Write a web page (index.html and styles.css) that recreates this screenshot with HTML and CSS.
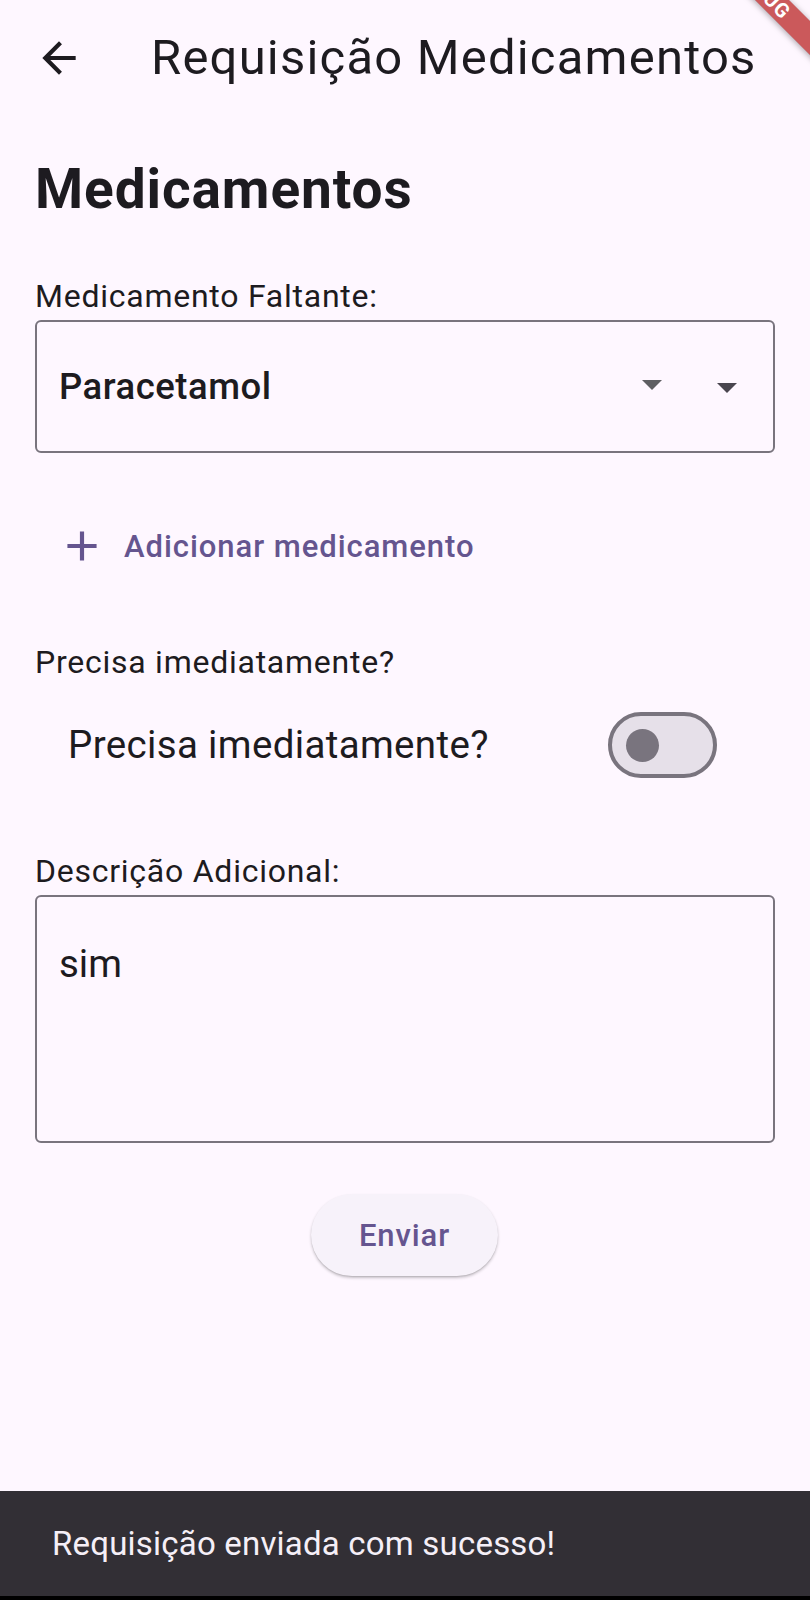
FILE: index.html
```html
<!DOCTYPE html>
<html lang="pt-BR">
<head>
<meta charset="utf-8">
<title>Requisição Medicamentos</title>
<link rel="stylesheet" href="styles.css">
</head>
<body>
<div class="screen">
  <header class="appbar">
    <button class="icon-btn back" aria-label="Voltar">
      <svg viewBox="0 0 24 24" width="50" height="50"><path d="M20 11H7.83l5.59-5.59L12 4l-8 8 8 8 1.41-1.41L7.83 13H20v-2z" fill="#1D1B20"/></svg>
    </button>
    <h1 class="title">Requisição Medicamentos</h1>
  </header>

  <main class="content">
    <h2 class="heading">Medicamentos</h2>

    <div class="field-label">Medicamento Faltante:</div>
    <div class="dropdown">
      <span class="dropdown-value">Paracetamol</span>
      <span class="dropdown-icons">
        <svg class="caret caret-light" viewBox="0 0 24 24" width="48" height="48"><path d="M7 10l5 5 5-5z"/></svg>
        <svg class="caret caret-dark" viewBox="0 0 24 24" width="48" height="48"><path d="M7 10l5 5 5-5z"/></svg>
      </span>
    </div>

    <button class="add-btn">
      <svg viewBox="0 0 24 24" width="50" height="50"><path d="M19 13h-6v6h-2v-6H5v-2h6V5h2v6h6v2z" fill="#65558F"/></svg>
      <span>Adicionar medicamento</span>
    </button>

    <div class="field-label label-urgent">Precisa imediatamente?</div>
    <div class="switch-row">
      <span class="switch-text">Precisa imediatamente?</span>
      <span class="switch"><span class="thumb"></span></span>
    </div>

    <div class="field-label label-desc">Descrição Adicional:</div>
    <div class="textarea">sim</div>

    <div class="actions">
      <button class="send-btn">Enviar</button>
    </div>
  </main>

  <div class="snackbar">Requisição enviada com sucesso!</div>
  <div class="navstrip"></div>

  <div class="debug-banner">DEBUG</div>
</div>
</body>
</html>
```

FILE: styles.css
```css
* { box-sizing: border-box; }

html, body {
  margin: 0;
  padding: 0;
  background: #FEF7FF;
}

body {
  font-family: Roboto, "Noto Sans", "Liberation Sans", sans-serif;
  color: #1D1B20;
}

.screen {
  position: relative;
  width: 810px;
  height: 1600px;
  overflow: hidden;
  display: flex;
  flex-direction: column;
  background: #FEF7FF;
}

/* App bar */
.appbar {
  height: 116px;
  display: flex;
  align-items: center;
  padding-left: 34px;
  flex: none;
}

.icon-btn {
  border: 0;
  background: none;
  padding: 0;
  margin: 0;
  display: flex;
  align-items: center;
  justify-content: center;
}

.icon-btn svg { display: block; }

.title {
  margin: 0 0 0 67px;
  font-size: 49px;
  font-weight: 400;
  line-height: 60px;
  letter-spacing: 1.2px;
  color: #1D1B20;
  white-space: nowrap;
}

/* Content */
.content {
  flex: 1;
  padding: 0 35px;
  display: flex;
  flex-direction: column;
}

.heading {
  margin: 40px 0 0;
  font-size: 55px;
  font-weight: 700;
  line-height: 66px;
  letter-spacing: 0.9px;
  color: #1D1B20;
}

.field-label {
  margin-top: 54px;
  font-size: 32px;
  line-height: 40px;
  letter-spacing: 0.75px;
  color: #1D1B20;
}

.label-urgent { margin-top: 56px; }
.label-desc { margin-top: 73px; }

.dropdown {
  margin-top: 4px;
  height: 133px;
  border: 2px solid #79747E;
  border-radius: 6px;
  display: flex;
  align-items: center;
  justify-content: space-between;
  padding: 0 22px 0 22px;
}

.dropdown-value {
  font-size: 36.5px;
  font-weight: 500;
  line-height: 44px;
  letter-spacing: 0.5px;
  color: #1D1B20;
}

.dropdown-icons {
  display: flex;
  align-items: center;
  gap: 27px;
}

.caret { display: block; }
.caret-light { fill: #5E5E62; margin-top: -5px; }
.caret-dark { fill: #49454F; }

/* Add button */
.add-btn {
  margin-top: 53px;
  align-self: flex-start;
  height: 80px;
  display: flex;
  align-items: center;
  gap: 17px;
  border: 0;
  background: none;
  padding: 0 0 0 22px;
  font-family: inherit;
  font-size: 31px;
  font-weight: 500;
  color: #65558F;
  letter-spacing: 0.95px;
}

.add-btn svg { display: block; }

/* Switch row */
.switch-row {
  margin-top: 30px;
  height: 66px;
  display: flex;
  align-items: center;
  justify-content: space-between;
  padding: 0 58px 0 33px;
}

.switch-text {
  font-size: 38.5px;
  line-height: 48px;
  letter-spacing: 0.35px;
  color: #1D1B20;
}

.switch {
  width: 109px;
  height: 66px;
  border: 4px solid #79747E;
  border-radius: 33px;
  background: #E6E0E9;
  display: flex;
  align-items: center;
  padding-left: 14px;
}

.thumb {
  width: 33px;
  height: 33px;
  border-radius: 50%;
  background: #79747E;
}

/* Text area */
.textarea {
  margin-top: 4px;
  height: 248px;
  border: 2px solid #79747E;
  border-radius: 6px;
  padding: 45px 22px 0;
  font-size: 38.5px;
  line-height: 44px;
  color: #1D1B20;
}

/* Submit */
.actions {
  margin-top: 51px;
  display: flex;
  justify-content: center;
}

.send-btn {
  width: 187px;
  height: 82px;
  border: 0;
  border-radius: 41px;
  background: #F7F2FA;
  box-shadow: 0 2px 3px rgba(0, 0, 0, 0.22), 0 1px 1px rgba(0, 0, 0, 0.08);
  font-family: inherit;
  font-size: 31px;
  font-weight: 500;
  color: #65558F;
  letter-spacing: 0.9px;
  margin-left: -1px;
}

/* Snackbar */
.snackbar {
  flex: none;
  height: 105px;
  background: #322F35;
  color: #F5EFF7;
  display: flex;
  align-items: center;
  padding-left: 52px;
  font-size: 33px;
  letter-spacing: 0.2px;
}

.navstrip {
  flex: none;
  height: 4px;
  background: #000;
}

/* Debug banner (overlay) */
.debug-banner {
  position: absolute;
  left: 663px;
  top: -21px;
  width: 200px;
  height: 24px;
  transform: rotate(45deg);
  background: rgba(183, 28, 28, 0.72);
  box-shadow: 0 1px 6px rgba(0, 0, 0, 0.35);
  color: #fff;
  font-size: 20px;
  font-weight: 700;
  line-height: 24px;
  text-align: center;
  letter-spacing: 1px;
}
```
